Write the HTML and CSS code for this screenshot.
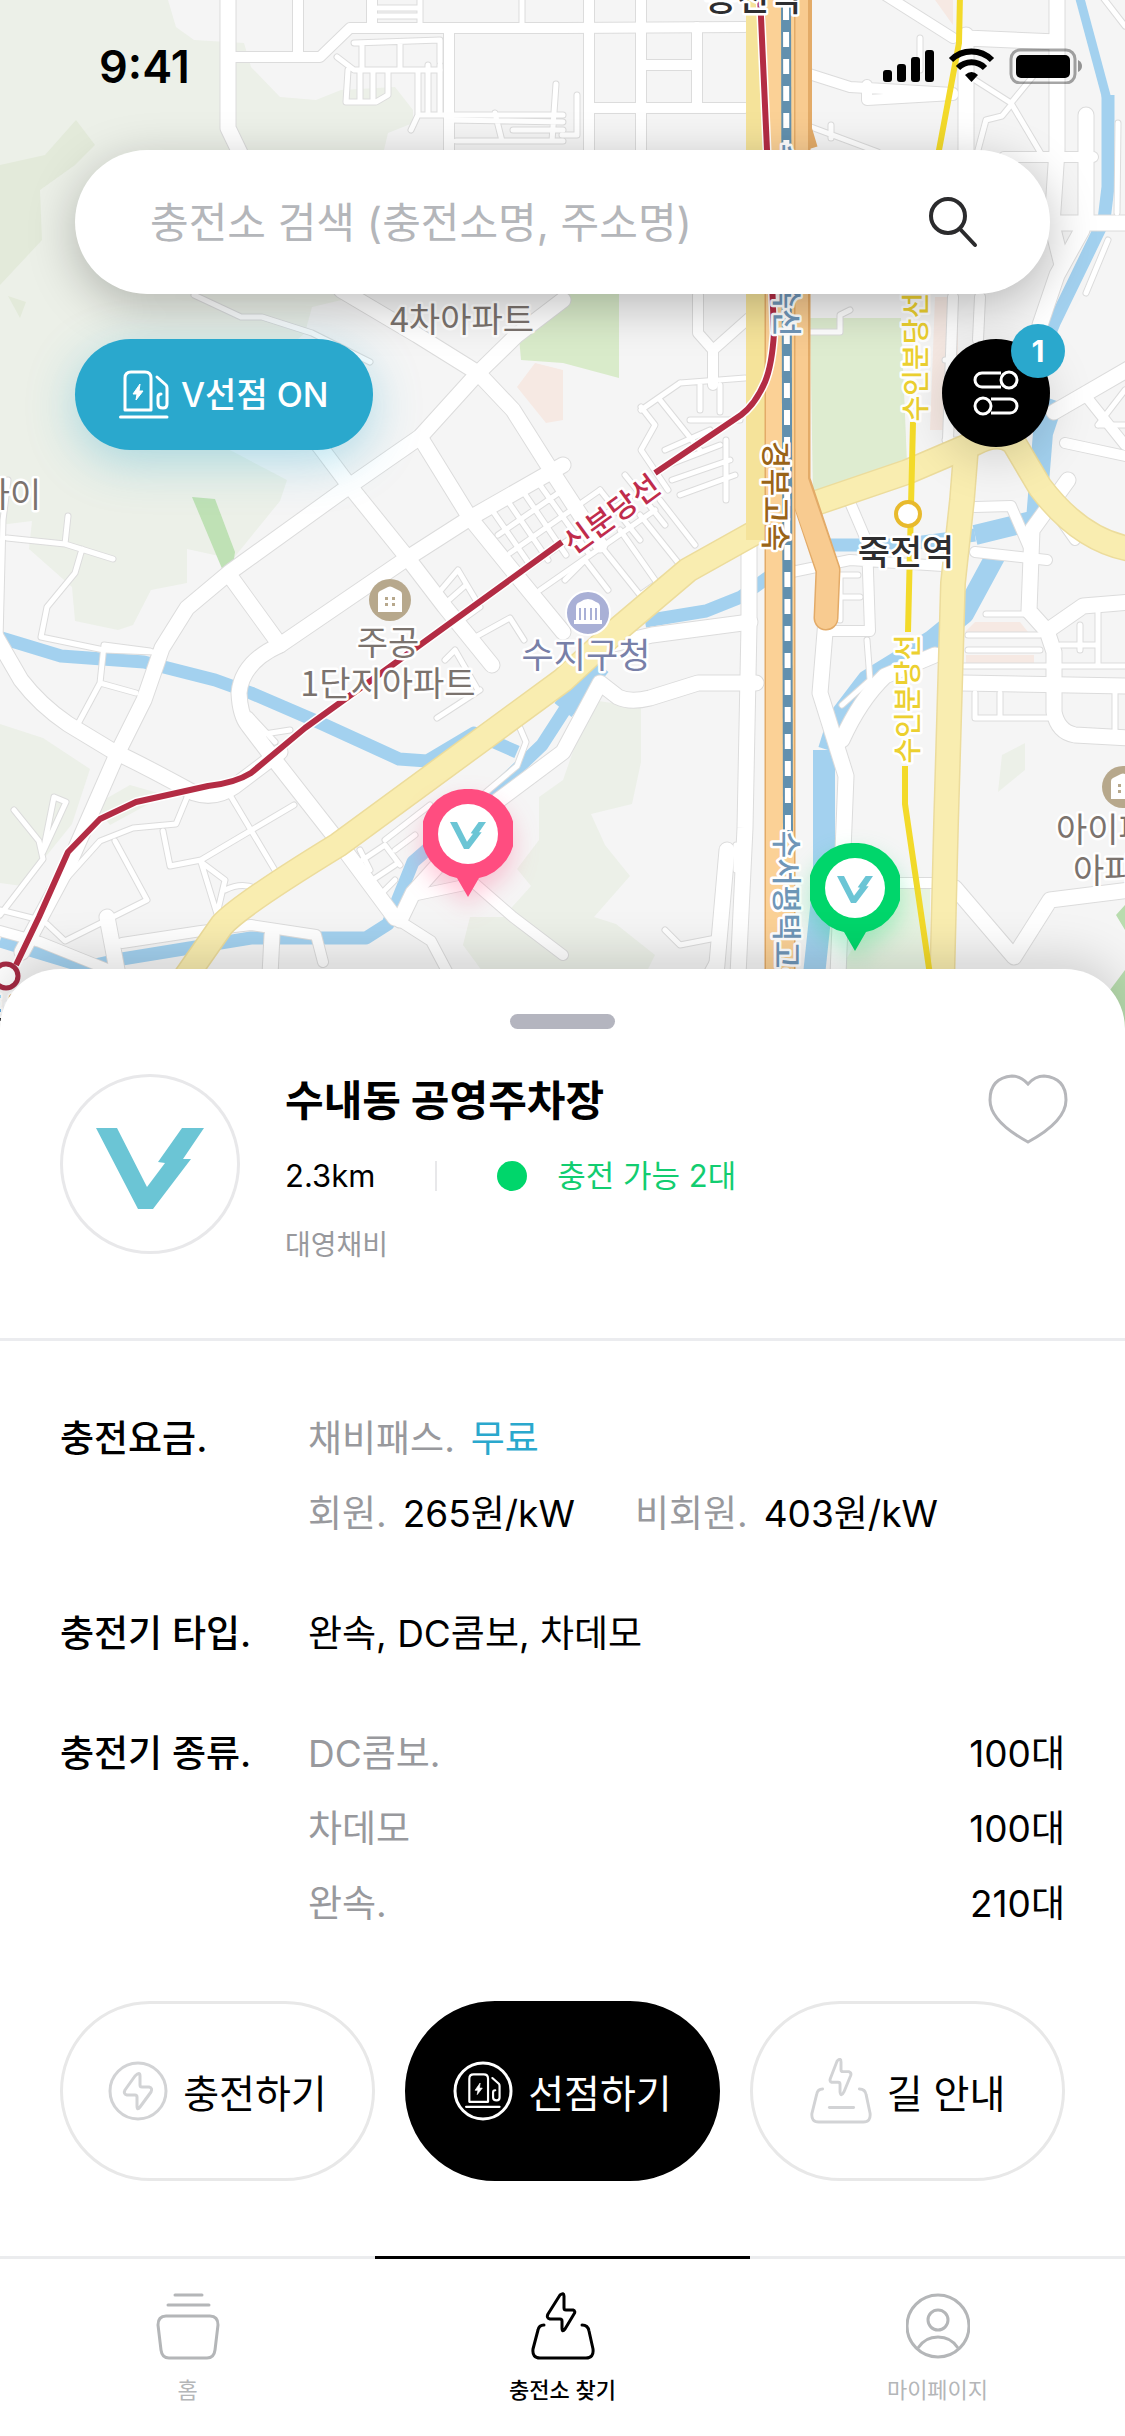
FILE: index.html
```html
<!DOCTYPE html>
<html lang="ko">
<head>
  <meta charset="UTF-8">
  <meta name="viewport" content="width=device-width, initial-scale=1.0">
  <title>충전소 찾기</title>
  <link rel="stylesheet" href="styles.css">
</head>
<body>
  <!-- shared icons -->
  <svg class="defs" aria-hidden="true">
    <symbol id="logo" viewBox="0 0 108 81">
      <path d="M0 0H21L51 59L69 35L62 34L86 0H108L87 31H95L57 81H42Z" fill="#6bc5d5"/>
    </symbol>
    <symbol id="pump" viewBox="0 0 50 50">
      <g fill="none" stroke="currentColor" stroke-width="3" stroke-linecap="round" stroke-linejoin="round">
        <path d="M6 40V8Q6 2 12 2H26Q32 2 32 8V40Z"/>
        <path d="M1.500 47H48"/>
        <path d="M38 7L47 15Q48 16 48 18V34Q48 38 44 38Q39 38 39 34V27Q39 24 42 24"/>
      </g>
      <path d="M21 14L14 24H18L17 30L24 21H20Z" fill="currentColor" stroke="currentColor" stroke-linejoin="round"/>
    </symbol>
    <symbol id="station" viewBox="0 0 64 68">
      <g fill="none" stroke="currentColor" stroke-width="3" stroke-linecap="round" stroke-linejoin="round">
        <path d="M29 3Q33 0 33 4V16Q33 18 35 18H42Q45 19 43 22L34 37Q31 41 31 36V29Q31 27 29 27H19Q15 26 17 22Z"/>
        <path d="M13 33Q8 33 7 38L2 57Q1 66 9 66H55Q63 66 62 57L58 39Q57 33 51 33"/>
      </g>
    </symbol>
    <symbol id="house" viewBox="0 0 42 42">
      <circle cx="21" cy="21" r="21" fill="#b7a88c"/>
      <path d="M9 15Q9 13 11 12L19 8Q21 7 23 8L31 12Q33 13 33 15V33H9Z" fill="#fff"/>
      <path d="M16 18h3v3h-3zM23 18h3v3h-3zM16 24h3v3h-3zM23 24h3v3h-3z" fill="#b7a88c"/>
    </symbol>
  </svg>

  <main class="app">
    <section class="map">
      <svg class="map-canvas" viewBox="0 0 1125 1029" preserveAspectRatio="xMidYMin slice" aria-hidden="true">
        <defs>
          <g id="roads-l">
            <path d="M228 -5V128L241 155"/>
            <path d="M563 300L517 335L478 373L420 437L348 487L230 572L187 608L162 648L144 700L118 752L97 800L68 866L22 952"/>
            <path d="M341 290L417 335L478 373L513 410L549 467L600 545"/>
            <path d="M315 440L348 484L406 556L445 607L492 665"/>
            <path d="M563 465L470 518L406 559L280 645Q242 662 239 693Q240 715 248 725L273 758L338 841L395 918"/>
            <path d="M-5 635L21 680Q40 705 68 724L111 750Q145 766 194 793Q215 800 235 786L280 752"/>
            <path d="M230 576L280 645M420 437L470 518L517 576L563 632"/>
            <path d="M400 920L413 893L492 805L563 752L600 683L618 697Q630 703 650 698L698 683H756"/>
            <path d="M609 645L652 635L750 622"/>
            <path d="M749 545V625L745 828L738 975M727 850L716 975"/>
            <path d="M826 620L820 693L846 776L838 975"/>
            <path d="M935 655L885 676Q860 700 842 740"/>
            <path d="M1057 -5V150L1052 225L1062 265M1050 223H1130M1086 115V223M966 35V150M966 38L1057 42"/>
            <path d="M1130 368L1054 412M1082 230L1057 275L1040 325"/>
            <path d="M1068 480L1032 530L1029 611L1047 631L1054 652V712Q1058 732 1075 735L1130 738"/>
            <path d="M962 683L1130 686M1047 631L1083 606L1130 602"/>
            <path d="M955 888L1014 957L1050 900L1130 890"/>
            <path d="M107 917L118 975M272 935L270 975"/>
          </g>
          <g id="roads-m">
            <path d="M235 57H320L350 28H563L745 27M298 -5V57M372 -5V27M449 30V155"/>
            <path d="M589 -5V155M641 -5V155M697 27V107M642 65H697M589 108H745"/>
            <path d="M885 -5L953 38M806 73L850 87L953 93M867 85V100L953 95"/>
            <path d="M1004 157H1093M1047 560L975 552M975 507L1011 506L1030 550M1047 500L1075 540"/>
            <path d="M953 297L948 440M980 297L978 340M1065 443L1130 457M1085 395L1125 445"/>
            <path d="M698 295V333L713 350V385M713 350L749 318"/>
            <path d="M792 572L850 560L943 566M849 500L867 542L870 631H828"/>
            <path d="M395 918L431 941L449 975M417 895L474 883L513 917L563 955"/>
            <path d="M122 943L201 931L251 925L316 935L323 962M0 931L40 942L122 975"/>
            <path d="M890 883H940"/>
          </g>
          <g id="roads-s">
            <path d="M194 295L241 317H262L312 333L370 362"/>
            <path d="M7 538L65 544L113 559M68 516L65 544M82 549L75 573L47 607L41 637L104 650L154 652M8 480L3 520L0 640"/>
            <path d="M104 645L100 683L79 722M100 683L136 693M104 645L150 651"/>
            <path d="M40 920L65 880L100 841L133 828L176 824L188 795M115 841L147 900L65 941L47 924"/>
            <path d="M163 831L170 866L201 860L294 805M230 795L276 872M201 862L217 914M217 914L225 880L201 862M225 890Q245 880 262 892"/>
            <path d="M14 810L39 841L43 859L0 915M43 852L54 797L66 802L43 852M0 910L40 920"/>
            <path d="M517 721L526 742L517 766L485 793"/>
            <path d="M337 57L354 70H440M354 43L440 40V62M362 43V68M400 43V68M348 70L346 102H376L388 95V70M360 70V102M373 70V102"/>
            <path d="M418 72V115L411 130M428 65V115M440 65V112M420 115H563M449 120L563 122M456 141H563M495 113L502 141M513 130H563M556 84L552 141M420 -5V27M378 8H420M378 16H420"/>
            <path d="M522 -5V27M577 95V135H562M811 127L878 152M831 125V138M920 38V70"/>
            <path d="M975 80L1011 103L1043 157M1034 75L1011 103M1011 105L1002 116L986 120L978 150"/>
            <path d="M1118 123L1117 213M1108 240L1086 293M1101 -5L1125 26"/>
            <path d="M1098 425L1125 390M1125 425L1098 425"/>
            <path d="M250 715L275 742M258 735L290 730"/>
            <path d="M441 590L458 570L480 607L462 620M449 600L466 585M470 640L510 618L524 640M445 660L455 650L478 690M437 718L480 690"/>
            <path d="M490 507L530 565M505 497L548 560M520 487L566 555M535 478L590 555M498 535L560 492M510 553L600 490M525 570L630 497M540 590L655 510"/>
            <path d="M565 580L585 560L608 590M600 545L640 595L690 560M620 530L655 580M640 515L680 565M660 500L695 545M600 490L640 540M625 475L665 525"/>
            <path d="M680 383L745 378M641 407L655 425L641 450L668 490M680 383L641 410M660 400L700 450M665 450L710 430M668 465L720 445M672 480L730 460M680 495L735 475M700 385V410M720 385V412M690 420H740M726 440V500"/>
            <path d="M355 865L385 845L400 865M365 885L395 865M360 850L370 870M385 840L430 805L440 825M380 895L395 880M395 850L415 835"/>
            <path d="M968 635H1040M968 650H1040M964 666H1130M986 614H1029M1000 693V718M975 718H1054M975 718V693M1115 690V738M1060 645H1098V620M1098 610V665M1080 625V650"/>
            <path d="M945 360H970M945 440H965M828 575H858M840 575V620M828 597H860M867 640L870 680L842 705"/>
            <path d="M665 930L680 945L716 938M716 955L705 975M736 845V870M810 332L840 332V315L850 310"/>
          </g>
        </defs>

        <rect width="1125" height="1029" fill="#f5f5f5"/>
        <g fill="#ecf0e8">
          <path d="M0 0H168L176 27L194 40L244 43L251 67L280 97L316 100L341 90L395 87L413 110V123L388 133L384 150V290L312 307L305 333L262 370L230 450L287 480L280 501L233 559L187 549V583L151 590L133 625L118 630L75 621L72 587L29 549L32 521L0 525Z"/>
          <path d="M0 724L43 738L90 769L72 824L22 886L0 883Z"/>
          <path d="M563 780L591 700L641 707V762L632 804L591 814L605 845L630 876L594 917L616 924L655 955L645 975H485L463 945L470 917L503 917L531 886L517 869L539 840V797Z"/>
          <path d="M1002 755L1025 743V770L998 792Z"/>
          <path d="M95 805L130 785L165 795L110 825Z"/>
        </g>
        <path d="M0 165L45 155L76 120L95 145L75 165L40 190L42 240L0 285Z" fill="#e3eada"/>
        <path d="M8 296L26 302L20 318Z" fill="#e3eada"/>
        <path d="M563 290H619V378L563 363L521 360L519 337Z" fill="#d9ebca"/>
        <path d="M810 318H901L907 463L813 497Z" fill="#deecd0"/>
        <path d="M192 497L215 499L235 552L233 566L223 571Z" fill="#bfe1b5"/>
        <path d="M1125 905L1116 915L1125 930ZM1125 970L1110 990L1118 1029H1125Z" fill="#b8dcae"/>
        <path d="M895 880H930V969H840Z" fill="#e8f3e2"/>
        <path d="M535 363L563 370V420L546 423L517 387ZM935 0H953V25ZM935 297H958V430H930ZM975 622H1020L1028 632H965ZM966 655H1034V665H966Z" fill="#f6e9e3"/>

        <!-- rivers -->
        <g fill="none" stroke="#a3d1ef" stroke-width="13" stroke-linejoin="round">
          <path d="M-5 636L61 656L144 662L215 680L251 693L316 721L399 759L427 761L474 733L517 752"/>
          <path d="M824 545H900L975 535M792 560L741 597L706 611L645 621M584 680L542 745L492 793L413 862L388 924L366 938H251L122 959L86 967L0 941" />
          <path d="M1079 -5L1108 103" stroke-width="9"/>
          <path d="M1108 95V187L1104 220L1054 323L1043 350"/>
          <path d="M1054 400L1043 433L1036 520L975 535M996 555L964 614L932 640L867 680L838 718L828 750" stroke-width="20"/>
          <path d="M824 750V880L814 975M600 665L563 710" stroke-width="22"/>
        </g>

        <!-- streets: casing, then fill -->
        <g fill="none" stroke="#dcdcdc" stroke-linejoin="round" stroke-linecap="round">
          <use href="#roads-s" stroke-width="7"/>
          <use href="#roads-m" stroke-width="12"/>
          <use href="#roads-l" stroke-width="17"/>
        </g>
        <g fill="none" stroke="#fff" stroke-linejoin="round" stroke-linecap="round">
          <use href="#roads-s" stroke-width="5"/>
          <use href="#roads-m" stroke-width="10"/>
          <use href="#roads-l" stroke-width="15"/>
        </g>

        <!-- highways -->
        <g fill="none" stroke-linejoin="round">
          <g stroke="#ecdc9c" stroke-width="26">
            <path id="hw-a" d="M180 985L222 925Q240 905 338 845L563 680L616 631L688 570L756 532"/>
            <path id="hw-b" d="M813 504L907 472L975 443Q1000 430 1014 443L1040 487Q1080 540 1130 549"/>
            <path id="hw-c" d="M966 450L962 500L953 583L946 824L942 985"/>
          </g>
          <g stroke="#f9edb0" stroke-width="23">
            <use href="#hw-a"/>
            <use href="#hw-b"/>
            <use href="#hw-c"/>
          </g>
          <path d="M756 -5V540" stroke="#f5e39a" stroke-width="20"/>
          <path d="M800 -5V130L806 150" stroke="#e3ab68" stroke-width="24"/>
          <path d="M798 -5V480L828 570L826 618" stroke="#e3ab68" stroke-width="25" stroke-linecap="round"/>
          <path d="M797 -5V480L828 570L826 618" stroke="#f8cb90" stroke-width="22" stroke-linecap="round"/>
          <path d="M780 -5V985" stroke="#e3ab68" stroke-width="31"/>
          <path d="M780 -5V985" stroke="#fbd196" stroke-width="28"/>
          <path d="M786 -5L788 835" stroke="#6290ae" stroke-width="10"/>
          <path d="M786 5L788 835" stroke="#fff" stroke-width="6" stroke-dasharray="15 12"/>
          <g stroke="#fff" stroke-width="9">
            <path id="shinbundang" d="M760 -5L767 150L774 333Q772 365 765 382Q755 405 741 415L655 473M562 542L391 666L305 728L251 773Q235 783 208 786L136 802L100 819L68 852L39 917L16 965"/>
          </g>
          <use href="#shinbundang" stroke="#b32c44" stroke-width="6"/>
          <path d="M960 -5L959 43L939 150L917 290M913 422L908 632M905 766V804L930 975" stroke="#f3da2a" stroke-width="6"/>
        </g>
        <circle cx="6" cy="976" r="12" fill="#fff" stroke="#a52a43" stroke-width="5"/>
        <circle cx="908" cy="514" r="12" fill="#fff" stroke="#e8ba2d" stroke-width="4"/>

        <!-- places -->
        <use href="#house" x="369" y="579" width="42" height="42"/>
        <use href="#house" x="1102" y="766" width="42" height="42"/>
        <circle cx="588" cy="613" r="22" fill="#a9b0d6" stroke="#fff" stroke-width="2"/>
        <path d="M576 607Q576 603 580 602Q588 596 596 602Q600 603 600 607V620H602V624H574V620H576Z" fill="#fff"/>
        <path d="M580 608V620M585 608V620M591 608V620M596 608V620" stroke="#a9b0d6" stroke-width="2"/>

        <g class="labels">
          <text class="place" x="462" y="332">4차아파트</text>
          <text class="place" x="388" y="655">주공</text>
          <text class="place" x="388" y="696">1단지아파트</text>
          <text class="place" x="10" y="507">가이</text>
          <text class="place start" x="1056" y="842">아이파크</text>
          <text class="place start" x="1073" y="883">아파트</text>
          <text class="office" x="586" y="668">수지구청</text>
          <text class="stop" x="906" y="565">죽전역</text>
          <text class="stop" x="753" y="11">동천역</text>
          <text class="stop start" x="-27" y="1022">토월</text>
          <text class="line-red" transform="translate(618 523) rotate(-36)">신분당선</text>
          <text class="line-brown" transform="translate(765 496) rotate(90)">경부고속</text>
          <text class="line-blue" transform="translate(776 240) rotate(90)">수서평택고속선</text>
          <text class="line-blue" transform="translate(776 927) rotate(90)">수서평택고속선</text>
          <text class="line-yellow" transform="translate(926 357) rotate(-90)">수인분당선</text>
          <text class="line-yellow" transform="translate(918 699) rotate(-90)">수인분당선</text>
        </g>
      </svg>

      <button class="pin pin-pink" type="button" aria-label="충전소">
        <svg viewBox="0 0 90 108" width="90" height="108"><path d="M45 0A45 45 0 0 1 56 89L45 108L34 89A45 45 0 0 1 45 0Z" fill="currentColor"/><circle cx="45" cy="45" r="30" fill="#fff"/><use href="#logo" x="27" y="33" width="36" height="27"/></svg>
      </button>
      <button class="pin pin-green" type="button" aria-label="충전소">
        <svg viewBox="0 0 90 108" width="90" height="108"><path d="M45 0A45 45 0 0 1 56 89L45 108L34 89A45 45 0 0 1 45 0Z" fill="currentColor"/><circle cx="45" cy="45" r="30" fill="#fff"/><use href="#logo" x="27" y="33" width="36" height="27"/></svg>
      </button>

      <div class="overlay">
        <header class="status">
          <span>9:41</span>
          <svg viewBox="0 0 201 36" width="201" height="36" aria-hidden="true">
            <rect x="1" y="22" width="9" height="12" rx="3"/>
            <rect x="15" y="16" width="9" height="18" rx="3"/>
            <rect x="29" y="9" width="9" height="25" rx="3"/>
            <rect x="43" y="2" width="9" height="32" rx="3"/>
            <g fill="none" stroke="#000" stroke-width="6">
              <path d="M69 12A29 29 0 0 1 110 12"/>
              <path d="M76 20A19 19 0 0 1 103 20"/>
            </g>
            <path d="M83 27Q89.500 21 96 27L89.500 34Z"/>
            <rect x="129" y="2" width="64" height="33" rx="9" fill="none" stroke="#000" stroke-opacity=".35" stroke-width="3"/>
            <rect x="134" y="7" width="54" height="23" rx="5"/>
            <path d="M196 12Q200 14 200 18Q200 22 196 24Z" opacity=".4"/>
          </svg>
        </header>

        <form class="search">
          <input type="search" placeholder="충전소 검색 (충전소명, 주소명)" aria-label="충전소 검색">
          <button type="button" aria-label="검색">
            <svg viewBox="0 0 52 52" width="52" height="52" fill="none" stroke="#2b2b2d" stroke-width="4" stroke-linecap="round"><circle cx="20" cy="20" r="17"/><path d="M32 33L47 49"/></svg>
          </button>
        </form>

        <div class="filters">
          <button class="toggle" type="button" aria-pressed="true">
            <svg width="50" height="50" aria-hidden="true"><use href="#pump"/></svg>
            V선점 ON
          </button>
          <button class="filter" type="button" aria-label="필터">
            <svg viewBox="0 0 46 46" width="46" height="46" fill="none" stroke="#fff" stroke-width="3">
              <path d="M28 17H9A7 7 0 0 1 9 3H28"/><circle cx="36" cy="10" r="8"/>
              <path d="M18 43H37A7 7 0 0 0 37 29H18"/><circle cx="10" cy="36" r="8"/>
            </svg>
            <span class="badge">1</span>
          </button>
        </div>
      </div>
    </section>

    <section class="sheet">
      <div class="handle"></div>

      <div class="summary">
        <div class="avatar"><svg width="108" height="81" aria-hidden="true"><use href="#logo"/></svg></div>
        <div class="info">
          <h1>수내동 공영주차장</h1>
          <p class="state"><span class="distance">2.3km</span><span class="available">충전 가능 2대</span></p>
          <p class="company">대영채비</p>
        </div>
        <button class="like" type="button" aria-label="찜하기">
          <svg viewBox="0 0 80 72" width="80" height="72" fill="none" stroke="#b6b7bb" stroke-width="3"><path d="M40 10Q33 2 24 2Q2 4 2 26C2 42 18 56 40 68C62 56 78 42 78 26Q78 4 56 2Q47 2 40 10Z"/></svg>
        </button>
      </div>

      <dl class="details">
        <dt>충전요금.</dt>
        <dd>
          <p class="pair">채비패스. <strong class="free">무료</strong></p>
          <div class="prices">
            <p class="pair">회원. <strong>265원/kW</strong></p>
            <p class="pair">비회원. <strong>403원/kW</strong></p>
          </div>
        </dd>
        <dt>충전기 타입.</dt>
        <dd class="type">완속, DC콤보, 차데모</dd>
        <dt>충전기 종류.</dt>
        <dd>
          <p class="count">DC콤보. <strong>100대</strong></p>
          <p class="count">차데모 <strong>100대</strong></p>
          <p class="count">완속. <strong>210대</strong></p>
        </dd>
      </dl>

      <div class="actions">
        <button type="button">
          <svg viewBox="0 0 60 60" width="60" height="60" fill="none" stroke="#d2d3d5" stroke-width="3" stroke-linejoin="round" aria-hidden="true"><circle cx="30" cy="30" r="28"/><path d="M27 15Q32 10 32 15V24Q32 26 34 26H41Q45 27 43 31L32 46Q29 50 29 45V36Q29 34 27 34H19Q15 33 17 29Z"/></svg>
          충전하기
        </button>
        <button class="primary" type="button">
          <svg viewBox="0 0 60 60" width="60" height="60" aria-hidden="true"><circle cx="30" cy="30" r="28" fill="none" stroke="#fff" stroke-width="3"/><use href="#pump" x="12" y="12" width="36" height="36"/></svg>
          선점하기
        </button>
        <button type="button">
          <svg class="route" viewBox="0 0 64 68" width="62" height="66" aria-hidden="true"><g fill="none" stroke="currentColor" stroke-width="3" stroke-linecap="round" stroke-linejoin="round"><path d="M28 3Q32 -1 32 4V12Q32 14 34 14H40Q43 15 42 18L35 35Q32 41 31 35V27Q31 25 29 25H22Q20 24 21 21Z"/><path d="M13 32Q8 32 7 37L2 57Q1 66 9 66H55Q63 66 62 57L58 38Q57 32 51 32"/><path d="M20 51H45"/></g></svg>
          길 안내
        </button>
      </div>
    </section>

    <nav class="tabs">
      <a href="#">
        <svg viewBox="0 0 64 68" width="64" height="68" fill="none" stroke="currentColor" stroke-width="3" stroke-linecap="round" aria-hidden="true"><path d="M19 3H46M12 13H53"/><path d="M10 24H54Q62 24 62 33L59 58Q58 66 51 66H13Q6 66 5 58L2 33Q2 24 10 24Z"/></svg>
        홈
      </a>
      <a class="active" href="#">
        <svg width="64" height="68" aria-hidden="true"><use href="#station"/></svg>
        충전소 찾기
      </a>
      <a href="#">
        <svg viewBox="0 0 64 68" width="64" height="68" fill="none" stroke="currentColor" stroke-width="3" aria-hidden="true"><circle cx="32" cy="34" r="31"/><circle cx="32" cy="28" r="10"/><path d="M12 56Q19 45 32 45Q45 45 52 56"/></svg>
        마이페이지
      </a>
    </nav>
  </main>
</body>
</html>
```
FILE: styles.css
```css
* {
  box-sizing: border-box;
}

body {
  margin: 0;
  background: #fff;
  color: #000;
  font-family: Inter, "Noto Sans CJK KR", sans-serif;
}

h1, p, dl, dd {
  margin: 0;
}

button, input {
  border: none;
  padding: 0;
  background: none;
  color: inherit;
  font: inherit;
}

button {
  cursor: pointer;
}

svg {
  display: block;
  flex: none;
}

.defs {
  position: absolute;
  width: 0;
  height: 0;
}

.app {
  display: flex;
  flex-direction: column;
  min-height: 100vh;
}

/* map */
.map {
  position: relative;
  height: 1029px;
  overflow: hidden;
}

.map-canvas {
  position: absolute;
  top: 0;
  left: 0;
  width: 100%;
  height: 100%;
}

.labels text {
  font-family: "Noto Sans CJK KR", sans-serif;
  font-size: 30px;
  text-anchor: middle;
  paint-order: stroke;
  stroke: #fff;
  stroke-width: 5px;
  stroke-linejoin: round;
}

.labels .place { fill: #7b736e; font-size: 34px; }
.labels .office { fill: #7880a8; font-size: 35px; }
.labels .stop { fill: #2e2e30; font-size: 35px; font-weight: 500; }
.labels .start { text-anchor: start; }
.labels .line-red { fill: #c02c4c; font-weight: 500; }
.labels .line-brown { fill: #9a6418; font-weight: 500; }
.labels .line-blue { fill: #7096b8; font-weight: 500; }
.labels .line-yellow { fill: #ecd030; font-size: 28px; font-weight: 500; }

.pin {
  position: absolute;
}

.pin-pink {
  left: 423px;
  top: 789px;
  color: #ff4d80;
  filter: drop-shadow(0 12px 12px rgba(255, 77, 128, 0.3));
}

.pin-green {
  left: 810px;
  top: 843px;
  color: #00d66b;
  filter: drop-shadow(0 12px 12px rgba(0, 214, 107, 0.3));
}

.overlay {
  position: relative;
  padding: 0 75px;
}

.status {
  display: flex;
  align-items: center;
  justify-content: space-between;
  height: 150px;
  margin-right: -33px;
  padding: 0 0 18px 24px;
  font-size: 45px;
  font-weight: 600;
}

.search {
  display: flex;
  align-items: center;
  height: 144px;
  padding: 0 70px 0 75px;
  border-radius: 72px;
  background: #fff;
  box-shadow: 0 12px 48px rgba(0, 0, 0, 0.25);
}

.search input {
  flex: 1;
  min-width: 0;
  font-size: 42px;
  outline: none;
}

.search input::placeholder {
  color: #b4b6ba;
  opacity: 1;
}

.filters {
  display: flex;
  justify-content: space-between;
  margin-top: 45px;
}

.toggle {
  display: flex;
  align-items: center;
  gap: 12px;
  height: 111px;
  padding: 0 44px;
  border-radius: 56px;
  background: #2aa8cd;
  box-shadow: 0 12px 48px rgba(42, 168, 205, 0.35);
  color: #fff;
  font-size: 34px;
  font-weight: 500;
  line-height: 42px;
}

.filter {
  display: flex;
  align-items: center;
  justify-content: center;
  position: relative;
  width: 108px;
  height: 108px;
  border-radius: 50%;
  background: #000;
  box-shadow: 0 12px 48px rgba(0, 0, 0, 0.15);
}

.badge {
  position: absolute;
  top: -15px;
  right: -15px;
  width: 54px;
  border-radius: 50%;
  background: #2aa8cd;
  color: #fff;
  font-size: 30px;
  font-weight: 700;
  line-height: 54px;
}

/* station sheet */
.sheet {
  position: relative;
  flex: 1;
  margin-top: -60px;
  padding: 45px 0 75px;
  border-radius: 60px 60px 0 0;
  background: #fff;
  box-shadow: 0 -12px 48px rgba(0, 0, 0, 0.15);
}

.handle {
  width: 105px;
  height: 15px;
  margin: 0 auto;
  border-radius: 8px;
  background: #b4b5bf;
}

.summary {
  display: flex;
  align-items: flex-start;
  padding: 45px 57px 72px 60px;
  border-bottom: 3px solid #ebecef;
}

.avatar {
  display: flex;
  align-items: center;
  justify-content: center;
  width: 180px;
  height: 180px;
  margin-right: 45px;
  padding-top: 9px;
  border: 3px solid #e8e8ea;
  border-radius: 50%;
}

.info {
  flex: 1;
}

.info h1 {
  font-size: 42px;
  font-weight: 700;
  line-height: 54px;
}

.state {
  display: flex;
  align-items: center;
  margin-top: 22px;
  font-size: 31px;
  line-height: 52px;
}

.distance {
  display: flex;
  align-items: center;
}

.distance::after {
  content: "";
  width: 2px;
  height: 30px;
  margin: 0 60px;
  background: #e8e8ea;
}

.available {
  display: flex;
  align-items: center;
  gap: 30px;
  color: #12cd70;
}

.available::before {
  content: "";
  width: 30px;
  height: 30px;
  border-radius: 50%;
  background: #00d66b;
}

.company {
  margin-top: 22px;
  color: #98999d;
  font-size: 28px;
  line-height: 42px;
}

.details {
  display: grid;
  grid-template-columns: 248px 1fr;
  row-gap: 45px;
  padding: 60px 60px 0;
  font-size: 37px;
  line-height: 75px;
}

.details dt {
  font-weight: 500;
}

.details dd {
  color: #98999d;
}

.details strong,
.details .type {
  color: #000;
  font-weight: 400;
}

.details .free {
  color: #2aa8cd;
}

.pair {
  display: flex;
  gap: 16px;
}

.prices {
  display: flex;
  gap: 60px;
}

.count {
  display: flex;
  justify-content: space-between;
}

.actions {
  display: grid;
  grid-template-columns: repeat(3, 1fr);
  gap: 30px;
  padding: 60px 60px 0;
}

.actions button {
  display: flex;
  align-items: center;
  justify-content: center;
  gap: 15px;
  height: 180px;
  border: 3px solid #e8e8e8;
  border-radius: 90px;
  font-size: 39px;
}

.actions .primary {
  border-color: #000;
  background: #000;
  color: #fff;
}

.route {
  color: #d2d3d5;
}

/* bottom tabs */
.tabs {
  display: grid;
  grid-template-columns: repeat(3, 1fr);
  position: relative;
  background: #fff;
}

.tabs a {
  display: flex;
  flex-direction: column;
  align-items: center;
  gap: 12px;
  height: 180px;
  padding-top: 33px;
  border-top: 3px solid #ebecee;
  color: #b4b6b8;
  font-size: 22px;
  line-height: 36px;
  text-decoration: none;
}

.tabs .active {
  border-color: #000;
  color: #000;
  font-weight: 500;
}
```
